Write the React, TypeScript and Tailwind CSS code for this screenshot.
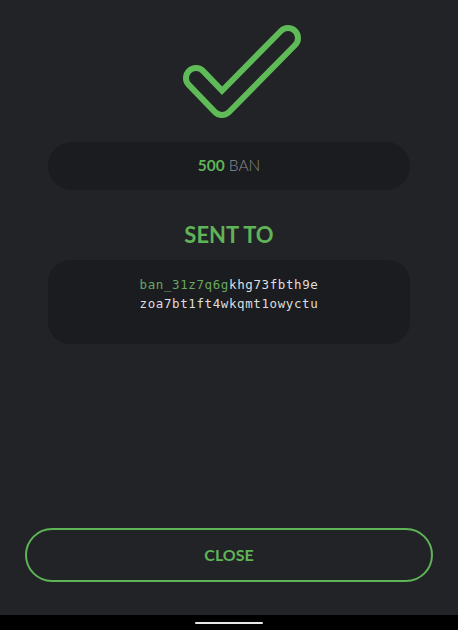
import React from "react";

export default function App() {
  return (
    <div className="w-[458px] h-[630px] bg-[#222327] flex flex-col font-['Lato',sans-serif]">
      <div className="flex-1 flex flex-col items-center">
        <svg width="150" height="110" viewBox="0 0 150 110" className="mt-[16px] shrink-0">
          <polyline points="42,62 68,89 134,22" fill="none" stroke="#5fbb57" strokeWidth="26" strokeLinecap="round" strokeLinejoin="round" />
          <polyline points="42,62 68,89 134,22" fill="none" stroke="#222327" strokeWidth="14" strokeLinecap="round" strokeLinejoin="round" />
        </svg>
        <div className="mt-[16px] w-[362px] h-[48px] rounded-full bg-[#1b1c1f] flex items-center justify-center text-[15.5px]">
          <span className="font-bold text-[#5fb457]">500</span>
          <span className="ml-[4px] font-light text-[#8c8d8e]">BAN</span>
        </div>
        <div className="mt-[31px] text-[22px] leading-[28px] font-bold text-[#5fb457]">SENT TO</div>
        <div className="mt-[11px] w-[362px] h-[84px] rounded-[22px] bg-[#1b1c1f] pt-[15px] flex flex-col items-center font-['DejaVu_Sans_Mono',monospace] text-[12.5px] tracking-[0.6px] leading-[19px] text-[#dedede]">
          <div>
            <span className="text-[#66a85f]">ban_31z7q6g</span>khg73fbth9e
          </div>
          <div>zoa7bt1ft4wkqmt1owyctu</div>
        </div>
      </div>
      <div className="px-[25px] pb-[33px]">
        <button className="w-full h-[54px] rounded-full border-2 border-[#5fb457] flex items-center justify-center text-[16px] font-bold text-[#5fb457]">
          CLOSE
        </button>
      </div>
      <div className="h-[15px] bg-black flex items-center justify-center">
        <div className="w-[68px] h-[2px] bg-[#e8e8e8] rounded-full mt-[1px]" />
      </div>
    </div>
  );
}
